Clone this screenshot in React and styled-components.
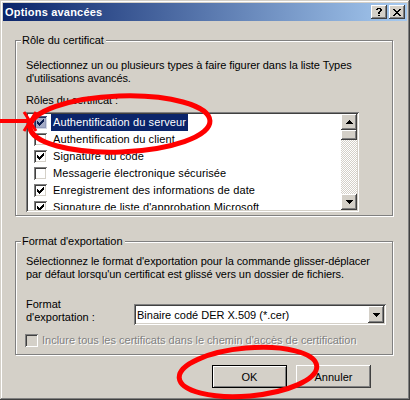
import React from "react"
import styled, { createGlobalStyle } from "styled-components"

const face = "#d4d0c8"

const raised = `box-shadow: inset -1px -1px #404040, inset 1px 1px #fff, inset -2px -2px #808080, inset 2px 2px ${face};`
const sunken = `box-shadow: inset 1px 1px #808080, inset -1px -1px #fff, inset 2px 2px #404040, inset -2px -2px ${face};`

const GlobalStyle = createGlobalStyle`
  html, body {
    margin: 0;
    padding: 0;
    background: ${face};
  }
  body {
    font-family: "Liberation Sans", Arial, sans-serif;
    font-size: 11px;
    color: #000;
  }
`

const Window = styled.div`
  position: relative;
  width: 410px;
  height: 400px;
  box-sizing: border-box;
  padding: 3px;
  background: ${face};
  box-shadow: inset -1px -1px #404040, inset 1px 1px ${face}, inset -2px -2px #808080, inset 2px 2px #fff;
  display: flex;
  flex-direction: column;
  overflow: hidden;
`

const TitleBar = styled.div`
  height: 18px;
  display: flex;
  align-items: center;
  padding: 0 2px;
  background: linear-gradient(to right, #0a246a, #a6caf0);
  color: #fff;
  font-weight: bold;
`

const Title = styled.span`
  flex: 1;
  line-height: 18px;
  letter-spacing: 0.2px;
`

const Caps = styled.div`
  display: flex;
  gap: 2px;
`

const CapButton = styled.div`
  width: 16px;
  height: 14px;
  box-sizing: border-box;
  display: flex;
  align-items: center;
  justify-content: center;
  background: ${face};
  ${raised}
`

const Body = styled.div`
  display: flex;
  flex-direction: column;
  padding: 19px 14px 0 12px;
`

const Group = styled.div`
  position: relative;
  height: ${p => p.$h}px;
  box-sizing: border-box;
  border: 1px solid #808080;
  box-shadow: inset 1px 1px #fff, 1px 1px #fff;
  padding: ${p => p.$pad};
  margin-top: ${p => p.$mt || 0}px;
`

const Legend = styled.span`
  position: absolute;
  top: -7px;
  left: 5px;
  padding: 0 2px 0 1px;
  background: ${face};
  line-height: 13px;
  white-space: nowrap;
`

const Text = styled.p`
  margin: ${p => p.$mt || 0}px 0 0;
  line-height: 13px;
  white-space: nowrap;
  letter-spacing: -0.08px;
`

const ListBox = styled.div`
  margin-top: 5px;
  width: 333px;
  height: 100px;
  box-sizing: border-box;
  padding: 2px;
  background: #fff;
  ${sunken}
  display: flex;
`

const Items = styled.div`
  flex: 1;
  overflow: hidden;
`

const Item = styled.div`
  display: flex;
  align-items: center;
  height: 17px;
  padding-left: 6px;
`

const ItemLabel = styled.span`
  margin-left: 4px;
  padding: 0 2px;
  line-height: 17px;
  align-self: stretch;
  white-space: nowrap;
  letter-spacing: 0.1px;
  background: ${p => (p.$selected ? "#0a246a" : "transparent")};
  color: ${p => (p.$selected ? "#fff" : "#000")};
`

const ScrollBar = styled.div`
  width: 16px;
  display: flex;
  flex-direction: column;
`

const ScrollButton = styled.div`
  height: ${p => p.$h || 16}px;
  flex: none;
  box-sizing: border-box;
  display: flex;
  align-items: center;
  justify-content: center;
  background: ${face};
  ${raised}
`

const Track = styled.div`
  flex: 1;
  background: repeating-conic-gradient(#fff 0 25%, ${face} 0 50%) 0 0 / 2px 2px;
`

const Box = styled.span`
  width: 13px;
  height: 13px;
  flex: none;
  box-sizing: border-box;
  display: flex;
  align-items: center;
  justify-content: center;
  background: ${p => (p.$selected ? "#a4abc6" : p.$disabled ? face : "#fff")};
  box-shadow: ${p =>
    p.$selected
      ? "inset 1px 1px #4a5680, inset -1px -1px #d2d6e4, inset 2px 2px #202c58, inset -2px -2px #8f98b8"
      : `inset 1px 1px #808080, inset -1px -1px #fff, inset 2px 2px #404040, inset -2px -2px ${face}`};
`

const FormatRow = styled.div`
  display: flex;
  align-items: flex-start;
  margin-top: 17px;
`

const FieldLabel = styled.div`
  width: 108px;
  flex: none;
  line-height: 13px;
`

const Combo = styled.div`
  margin-top: 6px;
  width: 252px;
  height: 21px;
  box-sizing: border-box;
  padding: 2px;
  background: #fff;
  ${sunken}
  display: flex;
  align-items: center;
`

const ComboText = styled.span`
  flex: 1;
  padding-left: 1px;
  white-space: nowrap;
`

const ComboButton = styled.div`
  width: 16px;
  height: 17px;
  box-sizing: border-box;
  display: flex;
  align-items: center;
  justify-content: center;
  background: ${face};
  ${raised}
`

const CheckRow = styled.div`
  display: flex;
  align-items: center;
  gap: 4px;
  margin-top: 9px;
  margin-left: -1px;
  color: #808080;
  text-shadow: 1px 1px #fff;
  white-space: nowrap;
  line-height: 13px;
`

const Buttons = styled.div`
  display: flex;
  justify-content: flex-end;
  gap: 9px;
  margin-top: 10px;
  padding-right: 22px;
`

const Button = styled.div`
  width: 75px;
  height: 23px;
  box-sizing: border-box;
  display: flex;
  align-items: center;
  justify-content: center;
  background: ${face};
  ${p =>
    p.$default
      ? "border: 1px solid #000; box-shadow: inset 1px 1px #fff, inset -1px -1px #808080;"
      : raised}
`

const Overlay = styled.svg`
  position: absolute;
  left: 0;
  top: 0;
  pointer-events: none;
`

const Check = ({ color = "#000" }) => (
  <svg width="7" height="7" shapeRendering="crispEdges">
    {[2, 3, 4, 3, 2, 1, 0].map((y, x) => (
      <rect key={x} x={x} y={y} width="1" height="3" fill={color} />
    ))}
  </svg>
)

const Arrow = ({ down }) => (
  <svg width="7" height="4" shapeRendering="crispEdges">
    {[0, 1, 2, 3].map(i => {
      const row = down ? 3 - i : i
      return <rect key={i} x={3 - i} y={row} width={i * 2 + 1} height="1" fill="#000" />
    })}
  </svg>
)

const Pixels = ({ rows, w, h }) => (
  <svg width={w} height={h} shapeRendering="crispEdges">
    {rows.map((r, y) =>
      r.split("").map((c, x) => (c === "x" ? <rect key={x + "-" + y} x={x} y={y} width="1" height="1" fill="#000" /> : null))
    )}
  </svg>
)

const helpGlyph = [".xxxx.", "xx..xx", "....xx", "...xx.", "..xx..", "..xx..", "......", "..xx.."]
const closeGlyph = ["xx....xx", ".xx..xx.", "..xxxx..", "...xx...", "..xxxx..", ".xx..xx.", "xx....xx"]

const CheckBox = ({ checked, selected, disabled }) => (
  <Box $selected={selected} $disabled={disabled}>
    {checked && <Check color={selected ? "#0a1c50" : "#000"} />}
  </Box>
)

const roles = [
  { label: "Authentification du serveur", checked: true, selected: true },
  { label: "Authentification du client", checked: false },
  { label: "Signature du code", checked: true },
  { label: "Messagerie électronique sécurisée", checked: false },
  { label: "Enregistrement des informations de date", checked: true },
  { label: "Signature de liste d'approbation Microsoft", checked: true },
]

export default function App() {
  return (
    <>
      <GlobalStyle />
      <Window>
        <TitleBar>
          <Title>Options avancées</Title>
          <Caps>
            <CapButton>
              <Pixels rows={helpGlyph} w={6} h={8} />
            </CapButton>
            <CapButton>
              <Pixels rows={closeGlyph} w={8} h={7} />
            </CapButton>
          </Caps>
        </TitleBar>
        <Body>
          <Group $h={176} $pad="18px 0 0 10px">
            <Legend>Rôle du certificat</Legend>
            <Text>Sélectionnez un ou plusieurs types à faire figurer dans la liste Types</Text>
            <Text>d'utilisations avancés.</Text>
            <Text $mt={9}>Rôles du certificat :</Text>
            <ListBox>
              <Items>
                {roles.map(r => (
                  <Item key={r.label}>
                    <CheckBox checked={r.checked} selected={r.selected} />
                    <ItemLabel $selected={r.selected}>{r.label}</ItemLabel>
                  </Item>
                ))}
              </Items>
              <ScrollBar>
                <ScrollButton>
                  <Arrow />
                </ScrollButton>
                <ScrollButton $h={10} />
                <Track />
                <ScrollButton>
                  <Arrow down />
                </ScrollButton>
              </ScrollBar>
            </ListBox>
          </Group>
          <Group $h={114} $mt={25} $pad="13px 0 0 10px">
            <Legend>Format d'exportation</Legend>
            <Text>Sélectionnez le format d'exportation pour la commande glisser-déplacer</Text>
            <Text>par défaut lorsqu'un certificat est glissé vers un dossier de fichiers.</Text>
            <FormatRow>
              <FieldLabel>
                Format
                <br />
                d'exportation :
              </FieldLabel>
              <Combo>
                <ComboText>Binaire codé DER X.509 (*.cer)</ComboText>
                <ComboButton>
                  <Arrow down />
                </ComboButton>
              </Combo>
            </FormatRow>
            <CheckRow>
              <CheckBox disabled />
              <span>Inclure tous les certificats dans le chemin d'accès de certification</span>
            </CheckRow>
          </Group>
          <Buttons>
            <Button $default>OK</Button>
            <Button>Annuler</Button>
          </Buttons>
        </Body>
        <Overlay width="410" height="400">
          <ellipse cx="120" cy="124" rx="90" ry="28" transform="rotate(-2 120 124)" fill="none" stroke="#f00" strokeWidth="5" />
          <line x1="0" y1="121" x2="34" y2="121" stroke="#f00" strokeWidth="4" />
          <path d="M24 112 L36 131 M24 131 L36 112" stroke="#f00" strokeWidth="3" fill="none" />
          <ellipse cx="248" cy="372" rx="69" ry="24" transform="rotate(-5 248 372)" fill="none" stroke="#f00" strokeWidth="5" />
        </Overlay>
      </Window>
    </>
  )
}
